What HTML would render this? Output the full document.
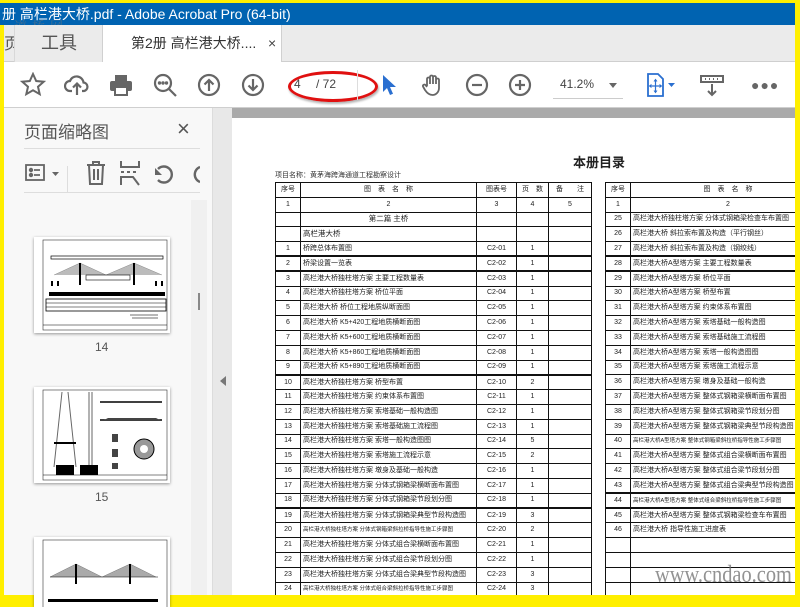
<!DOCTYPE html>
<html><head><meta charset="utf-8"><style>
*{margin:0;padding:0;box-sizing:border-box}
body{width:800px;height:600px;overflow:hidden;background:#ffef00;font-family:"Liberation Sans","Noto Sans CJK SC",sans-serif;position:relative}
.a{position:absolute}
.tb{left:0;top:3px;width:795px;height:22px;background:#0063b1;color:#fff;font-size:14px;line-height:22px;padding-left:2px;white-space:nowrap;overflow:hidden}
.tabs{left:4px;top:25px;width:791px;height:37px;background:#ebebeb;border-bottom:1px solid #cfcfcf}
.tool{left:10px;top:0;width:88px;height:37px;background:#ebebeb;border-left:1px solid #d8d8d8;font-size:18px;color:#555;line-height:37px;padding-left:26px}
.act{left:98px;top:0;width:180px;height:38px;background:#fff;border-left:1px solid #d0d0d0;border-right:1px solid #d0d0d0;font-size:14px;color:#333;line-height:37px;padding-left:28px}
.bar{left:4px;top:62px;width:791px;height:46px;background:#fff;border-bottom:1px solid #cfcfcf}
svg.i{position:absolute}
.panel{left:4px;top:108px;width:209px;height:487px;background:#f8f8f8;border-right:1px solid #dcdcdc}
.strip{left:213px;top:108px;width:19px;height:487px;background:#e8e8e8}
.doc{left:232px;top:108px;width:563px;height:487px;background:#fff;overflow:hidden}
table{border-collapse:collapse;position:absolute;font-size:7px;color:#222;table-layout:fixed}
td{border:1px solid #111;height:14.8px;line-height:12px;text-align:center;white-space:nowrap;overflow:hidden;padding:0}
td.n{text-align:left;padding-left:2px}
tr.tk td{border-bottom:2px solid #111}
.thumb{position:absolute;left:34px;width:136px;height:96px;background:#fff;box-shadow:0 1px 3px rgba(0,0,0,.4);overflow:hidden}
</style></head><body>
<div class="a tb">册 高栏港大桥.pdf - Adobe Acrobat Pro (64-bit)</div>
<div class="a" style="left:14px;top:16px;font-size:13px;color:rgba(120,120,120,.55);letter-spacing:5px;font-family:'Noto Serif CJK SC',serif">道桥网</div>
<div class="a tabs">
 <div class="a" style="left:0;top:0;width:10px;height:37px;font-size:16px;color:#555;line-height:40px;overflow:hidden">页</div>
 <div class="a tool">工具</div>
 <div class="a act">第2册 高栏港大桥....<span style="position:absolute;left:165px;font-size:14px;color:#444">×</span></div>
</div>
<div class="a bar"></div>
<svg class="i" style="left:20px;top:72px" width="26" height="26" viewBox="0 0 26 26" fill="none" stroke="#666" stroke-width="2"><path d="M13 2l3.2 7 7.5.7-5.7 5 1.7 7.4L13 18.3 6.3 22.1 8 14.7 2.3 9.7l7.5-.7z"/></svg>
<svg class="i" style="left:64px;top:72px" width="26" height="26" viewBox="0 0 26 26" fill="none" stroke="#666" stroke-width="2.2"><path d="M8 19H6a5 5 0 0 1 0-10 7 7 0 0 1 13.5 1.5A4.3 4.3 0 0 1 20 19h-2"/><path d="M13 23V12M9 15.5l4-4 4 4"/></svg>
<svg class="i" style="left:108px;top:72px" width="26" height="26" viewBox="0 0 26 26" fill="#666"><rect x="7" y="3" width="12" height="6"/><rect x="2" y="9" width="22" height="10" rx="2"/><rect x="7" y="15" width="12" height="8" fill="#fff" stroke="#666" stroke-width="2"/></svg>
<svg class="i" style="left:152px;top:72px" width="26" height="26" viewBox="0 0 26 26" fill="none" stroke="#666" stroke-width="2.2"><circle cx="11" cy="11" r="8"/><path d="M17 17l7 7"/><circle cx="7.5" cy="11" r=".6" fill="#666"/><circle cx="11" cy="11" r=".6" fill="#666"/><circle cx="14.5" cy="11" r=".6" fill="#666"/></svg>
<svg class="i" style="left:197px;top:73px" width="24" height="24" viewBox="0 0 24 24" fill="none" stroke="#666" stroke-width="2.2"><circle cx="12" cy="12" r="10"/><path d="M12 18V7M7.5 11.5 12 7l4.5 4.5"/></svg>
<svg class="i" style="left:241px;top:73px" width="24" height="24" viewBox="0 0 24 24" fill="none" stroke="#666" stroke-width="2.2"><circle cx="12" cy="12" r="10"/><path d="M12 6v11M7.5 12.5 12 17l4.5-4.5"/></svg>
<div class="a" style="left:294px;top:77px;font-size:12px;color:#444">4</div>
<div class="a" style="left:316px;top:77px;font-size:12px;color:#444">/ 72</div>
<div class="a" style="left:288px;top:71px;width:90px;height:31px;border:3px solid #e01010;border-radius:50%;box-shadow:1px 2px 2px rgba(0,0,0,.3)"></div>
<div class="a" style="left:357px;top:70px;width:1px;height:30px;background:#ddd"></div>
<svg class="i" style="left:381px;top:74px" width="16" height="22" viewBox="0 0 16 22"><path d="M2 1v17l4-4 3 7 3-1.3-3-6.7h6z" fill="#2a6fd0"/></svg>
<svg class="i" style="left:420px;top:72px" width="26" height="26" viewBox="0 0 26 26" fill="none" stroke="#666" stroke-width="1.8"><path d="M7 14V7a1.5 1.5 0 0 1 3 0v5V5a1.5 1.5 0 0 1 3 0v7V5.5a1.5 1.5 0 0 1 3 0V12V8a1.5 1.5 0 0 1 3 0v8c0 4-3 7-6.5 7S7 21 5 18l-2-3.5a1.5 1.5 0 0 1 2.5-1.5L7 15"/></svg>
<svg class="i" style="left:465px;top:73px" width="24" height="24" viewBox="0 0 24 24" fill="none" stroke="#666" stroke-width="2.2"><circle cx="12" cy="12" r="10"/><path d="M7 12h10"/></svg>
<svg class="i" style="left:508px;top:73px" width="24" height="24" viewBox="0 0 24 24" fill="none" stroke="#666" stroke-width="2.2"><circle cx="12" cy="12" r="10"/><path d="M7 12h10M12 7v10"/></svg>
<div class="a" style="left:560px;top:77px;font-size:12px;color:#444">41.2%</div>
<div class="a" style="left:609px;top:83px;border-left:4px solid transparent;border-right:4px solid transparent;border-top:5px solid #666"></div>
<div class="a" style="left:553px;top:98px;width:70px;height:1px;background:#ccc"></div>
<svg class="i" style="left:646px;top:73px" width="36" height="24" viewBox="0 0 36 24" fill="none" stroke="#2a6fd0" stroke-width="1.8"><path d="M2 1h10l5 5v17H2z"/><path d="M9.5 7v12M4 13h11" stroke-width="1.2"/><path d="M8 8.5l1.5-2 1.5 2M8 17.5l1.5 2 1.5-2M5.5 11.5l-2 1.5 2 1.5M13.5 11.5l2 1.5-2 1.5" stroke-width="1"/><path d="M22 10h7l-3.5 4z" fill="#2a6fd0" stroke="none"/></svg>
<svg class="i" style="left:700px;top:74px" width="24" height="24" viewBox="0 0 24 24" fill="none" stroke="#666" stroke-width="2"><rect x="1" y="2" width="22" height="6"/><path d="M5 5h1M9 5h1M13 5h1M17 5h1"/><path d="M12 10v11M8 17l4 4 4-4"/></svg>
<div class="a" style="left:751px;top:77px;font-size:14px;color:#666;letter-spacing:1px">●●●</div>
<div class="a panel">
 <div class="a" style="left:20px;top:10px;font-size:17px;color:#555">页面缩略图</div>
 <div class="a" style="left:173px;top:8px;font-size:22px;color:#555">×</div>
 <div class="a" style="left:20px;top:40px;width:176px;height:1px;background:#ddd"></div>
 <svg class="i" style="left:21px;top:55px" width="40" height="20" viewBox="0 0 40 20" fill="none" stroke="#666" stroke-width="1.8"><rect x="1" y="2" width="18" height="15"/><circle cx="6" cy="7" r="1.3" fill="#666"/><circle cx="6" cy="12" r="1.3" fill="#666"/><path d="M9 7h6M9 12h6"/><path d="M27 9h7l-3.5 4z" fill="#666" stroke="none"/></svg>
 <div class="a" style="left:63px;top:58px;width:1px;height:26px;background:#ddd"></div>
 <svg class="i" style="left:80px;top:52px" width="24" height="26" viewBox="0 0 24 26" fill="none" stroke="#666" stroke-width="2"><path d="M3 5h18M9 5V2h6v3M5 5l1 19h12l1-19M10 9v11M14 9v11"/></svg>
 <svg class="i" style="left:115px;top:52px" width="22" height="26" viewBox="0 0 22 26" fill="none" stroke="#666" stroke-width="2"><path d="M2 1v6h18V1M2 12h3M8 12h3M14 12h3M2 25v-8h12l6 8"/></svg>
 <svg class="i" style="left:148px;top:54px" width="24" height="24" viewBox="0 0 24 24" fill="none" stroke="#666" stroke-width="2.4"><path d="M6 7a8 8 0 1 1 0 11"/><path d="M3 13l0-7 7 7z" fill="#666" stroke="none"/></svg>
 <svg class="i" style="left:182px;top:54px" width="14" height="24" viewBox="0 0 14 24" fill="none" stroke="#666" stroke-width="2.4"><path d="M14 5a8 8 0 0 0 0 15"/></svg>
 <div class="a" style="left:20px;top:84px;width:176px;height:1px;background:#ddd"></div>
 <div class="a" style="left:187px;top:92px;width:16px;height:395px;background:#f0f0f0"></div>
 <div class="a" style="left:194px;top:185px;width:2px;height:17px;background:#888"></div>
 <div class="thumb" style="top:129px;left:30px">
  <svg width="136" height="96" viewBox="0 0 136 96"><rect x="9" y="3" width="124" height="90" fill="none" stroke="#333" stroke-width=".6"/><rect x="17" y="19" width="112" height="3" fill="none" stroke="#000" stroke-width=".7"/><path d="M20 38 L46 26 L72 38 L100 26 L128 38" fill="#bbb" stroke="#888" stroke-width=".5"/><path d="M46 26v22M100 26v22M18 44v5M24 44v5M122 44v5M128 44v5" stroke="#000" stroke-width="2"/><rect x="52" y="38" width="44" height="5" fill="none" stroke="#000" stroke-width=".6"/><rect x="15" y="55" width="116" height="4" fill="#000"/><rect x="12" y="62" width="120" height="12" fill="none" stroke="#000" stroke-width=".8"/><path d="M12 66h120M12 70h120" stroke="#000" stroke-width=".6"/><path d="M9 88h124" stroke="#000" stroke-width=".5"/><path d="M96 78h28M98 81h26" stroke="#444" stroke-width=".8"/></svg>
 </div>
 <div class="a" style="left:91px;top:232px;font-size:12px;color:#555">14</div>
 <div class="thumb" style="top:279px;left:30px">
  <svg width="136" height="96" viewBox="0 0 136 96"><rect x="9" y="3" width="124" height="90" fill="none" stroke="#333" stroke-width=".6"/><path d="M28 5 L20 80 M34 5 L42 80 M55 5 v75M58 5v75" stroke="#666" stroke-width="1"/><rect x="20" y="55" width="22" height="2" fill="#000"/><rect x="22" y="78" width="18" height="10" fill="#000"/><rect x="46" y="78" width="18" height="10" fill="#000"/><path d="M66 15h62M66 33h62" stroke="#000" stroke-width="1.5"/><path d="M70 33l4-2h48l4 2" fill="#444"/><circle cx="110" cy="62" r="10" fill="#999" stroke="#000"/><circle cx="110" cy="62" r="4" fill="#fff"/><rect x="78" y="47" width="6" height="8" fill="#444"/><rect x="78" y="62" width="6" height="8" fill="#444"/><rect x="78" y="76" width="6" height="6" fill="#444"/><path d="M9 88h124" stroke="#000" stroke-width=".5"/></svg>
 </div>
 <div class="a" style="left:91px;top:382px;font-size:12px;color:#555">15</div>
 <div class="thumb" style="top:429px;left:30px;height:70px">
  <svg width="136" height="70" viewBox="0 0 136 70"><rect x="9" y="3" width="124" height="70" fill="none" stroke="#333" stroke-width=".6"/><path d="M16 40 L42 27 L68 40 L96 27 L122 40" fill="#aaa" stroke="#777" stroke-width=".5"/><path d="M42 27v20M96 27v20" stroke="#000" stroke-width="2"/><path d="M16 40h108" stroke="#000" stroke-width=".6"/><rect x="14" y="62" width="110" height="3" fill="#000"/></svg>
 </div>
</div>
<div class="a strip"><div class="a" style="left:7px;top:268px;border-top:5px solid transparent;border-bottom:5px solid transparent;border-right:6px solid #777"></div></div>
<div class="a doc">
 <div class="a" style="left:0;top:0;width:563px;height:10px;background:#aaa"></div>
 <div class="a" style="left:341px;top:44px;font-size:13px;color:#222;font-weight:bold">本册目录</div>
 <div class="a" style="left:43px;top:62px;font-size:7px;color:#333">项目名称：黄茅海跨海通道工程勘察设计</div>
 <table style="left:43px;top:74px;width:316px">
  <colgroup><col style="width:25px"><col style="width:176px"><col style="width:40px"><col style="width:32px"><col style="width:43px"></colgroup>
  <tr><td>序号</td><td>图　表　名　称</td><td>图表号</td><td>页　数</td><td>备　　注</td></tr>
  <tr><td>1</td><td>2</td><td>3</td><td>4</td><td>5</td></tr>
  <tr><td></td><td style="font-size:7.5px">第二篇 主桥</td><td></td><td></td><td></td></tr>
  <tr><td></td><td class="n" style="font-size:7.5px">高栏港大桥</td><td></td><td></td><td></td></tr>
  <tr class="tk"><td>1</td><td class="n">桥跨总体布置图</td><td>C2-01</td><td>1</td><td></td></tr>
  <tr class="tk"><td>2</td><td class="n">桥梁设置一览表</td><td>C2-02</td><td>1</td><td></td></tr>
  <tr><td>3</td><td class="n">高栏港大桥独柱塔方案 主要工程数量表</td><td>C2-03</td><td>1</td><td></td></tr>
  <tr><td>4</td><td class="n">高栏港大桥独柱塔方案 桥位平面</td><td>C2-04</td><td>1</td><td></td></tr>
  <tr><td>5</td><td class="n">高栏港大桥 桥位工程地质纵断面图</td><td>C2-05</td><td>1</td><td></td></tr>
  <tr><td>6</td><td class="n">高栏港大桥 K5+420工程地质横断面图</td><td>C2-06</td><td>1</td><td></td></tr>
  <tr><td>7</td><td class="n">高栏港大桥 K5+600工程地质横断面图</td><td>C2-07</td><td>1</td><td></td></tr>
  <tr><td>8</td><td class="n">高栏港大桥 K5+860工程地质横断面图</td><td>C2-08</td><td>1</td><td></td></tr>
  <tr class="tk"><td>9</td><td class="n">高栏港大桥 K5+890工程地质横断面图</td><td>C2-09</td><td>1</td><td></td></tr>
  <tr><td>10</td><td class="n">高栏港大桥独柱塔方案 桥型布置</td><td>C2-10</td><td>2</td><td></td></tr>
  <tr><td>11</td><td class="n">高栏港大桥独柱塔方案 约束体系布置图</td><td>C2-11</td><td>1</td><td></td></tr>
  <tr><td>12</td><td class="n">高栏港大桥独柱塔方案 索塔基础一般构造图</td><td>C2-12</td><td>1</td><td></td></tr>
  <tr><td>13</td><td class="n">高栏港大桥独柱塔方案 索塔基础施工流程图</td><td>C2-13</td><td>1</td><td></td></tr>
  <tr><td>14</td><td class="n">高栏港大桥独柱塔方案 索塔一般构造图图</td><td>C2-14</td><td>5</td><td></td></tr>
  <tr><td>15</td><td class="n">高栏港大桥独柱塔方案 索塔施工流程示意</td><td>C2-15</td><td>2</td><td></td></tr>
  <tr><td>16</td><td class="n">高栏港大桥独柱塔方案 墩身及基础一般构造</td><td>C2-16</td><td>1</td><td></td></tr>
  <tr><td>17</td><td class="n">高栏港大桥独柱塔方案 分体式钢箱梁横断面布置图</td><td>C2-17</td><td>1</td><td></td></tr>
  <tr class="tk"><td>18</td><td class="n">高栏港大桥独柱塔方案 分体式钢箱梁节段划分图</td><td>C2-18</td><td>1</td><td></td></tr>
  <tr><td>19</td><td class="n">高栏港大桥独柱塔方案 分体式钢箱梁典型节段构造图</td><td>C2-19</td><td>3</td><td></td></tr>
  <tr><td>20</td><td class="n" style="font-size:5.5px">高栏港大桥独柱塔方案 分体式钢箱梁斜拉桥指导性施工步骤图</td><td>C2-20</td><td>2</td><td></td></tr>
  <tr><td>21</td><td class="n">高栏港大桥独柱塔方案 分体式组合梁横断面布置图</td><td>C2-21</td><td>1</td><td></td></tr>
  <tr><td>22</td><td class="n">高栏港大桥独柱塔方案 分体式组合梁节段划分图</td><td>C2-22</td><td>1</td><td></td></tr>
  <tr><td>23</td><td class="n">高栏港大桥独柱塔方案 分体式组合梁典型节段构造图</td><td>C2-23</td><td>3</td><td></td></tr>
  <tr><td>24</td><td class="n" style="font-size:5.5px">高栏港大桥独柱塔方案 分体式组合梁斜拉桥指导性施工步骤图</td><td>C2-24</td><td>3</td><td></td></tr>
 </table>
 <table style="left:373px;top:74px;width:220px">
  <colgroup><col style="width:25px"><col style="width:195px"></colgroup>
  <tr><td>序号</td><td>图　表　名　称</td></tr>
  <tr><td>1</td><td>2</td></tr>
  <tr><td>25</td><td class="n">高栏港大桥独柱塔方案 分体式钢箱梁检查车布置图</td></tr>
  <tr><td>26</td><td class="n">高栏港大桥 斜拉索布置及构造（平行钢丝）</td></tr>
  <tr class="tk"><td>27</td><td class="n">高栏港大桥 斜拉索布置及构造（钢绞线）</td></tr>
  <tr class="tk"><td>28</td><td class="n">高栏港大桥A型塔方案 主要工程数量表</td></tr>
  <tr><td>29</td><td class="n">高栏港大桥A型塔方案 桥位平面</td></tr>
  <tr><td>30</td><td class="n">高栏港大桥A型塔方案 桥型布置</td></tr>
  <tr><td>31</td><td class="n">高栏港大桥A型塔方案 约束体系布置图</td></tr>
  <tr><td>32</td><td class="n">高栏港大桥A型塔方案 索塔基础一般构造图</td></tr>
  <tr><td>33</td><td class="n">高栏港大桥A型塔方案 索塔基础施工流程图</td></tr>
  <tr><td>34</td><td class="n">高栏港大桥A型塔方案 索塔一般构造图图</td></tr>
  <tr><td>35</td><td class="n">高栏港大桥A型塔方案 索塔施工流程示意</td></tr>
  <tr><td>36</td><td class="n">高栏港大桥A型塔方案 墩身及基础一般构造</td></tr>
  <tr><td>37</td><td class="n">高栏港大桥A型塔方案 整体式钢箱梁横断面布置图</td></tr>
  <tr><td>38</td><td class="n">高栏港大桥A型塔方案 整体式钢箱梁节段划分图</td></tr>
  <tr><td>39</td><td class="n">高栏港大桥A型塔方案 整体式钢箱梁典型节段构造图</td></tr>
  <tr><td>40</td><td class="n" style="font-size:5.5px">高栏港大桥A型塔方案 整体式钢箱梁斜拉桥指导性施工步骤图</td></tr>
  <tr><td>41</td><td class="n">高栏港大桥A型塔方案 整体式组合梁横断面布置图</td></tr>
  <tr><td>42</td><td class="n">高栏港大桥A型塔方案 整体式组合梁节段划分图</td></tr>
  <tr class="tk"><td>43</td><td class="n">高栏港大桥A型塔方案 整体式组合梁典型节段构造图</td></tr>
  <tr class="tk"><td>44</td><td class="n" style="font-size:5.5px">高栏港大桥A型塔方案 整体式组合梁斜拉桥指导性施工步骤图</td></tr>
  <tr><td>45</td><td class="n">高栏港大桥A型塔方案 整体式钢箱梁检查车布置图</td></tr>
  <tr><td>46</td><td class="n">高栏港大桥 指导性施工进度表</td></tr>
  <tr><td></td><td></td></tr>
  <tr><td></td><td></td></tr>
  <tr><td></td><td></td></tr>
  <tr><td></td><td></td></tr>
 </table>
 <div class="a" style="left:423px;top:454px;font-size:24px;color:rgba(110,110,110,.75);font-family:'Liberation Serif',serif;transform:scaleX(.85);transform-origin:left">www.cndao.com</div>
</div>
</body></html>
